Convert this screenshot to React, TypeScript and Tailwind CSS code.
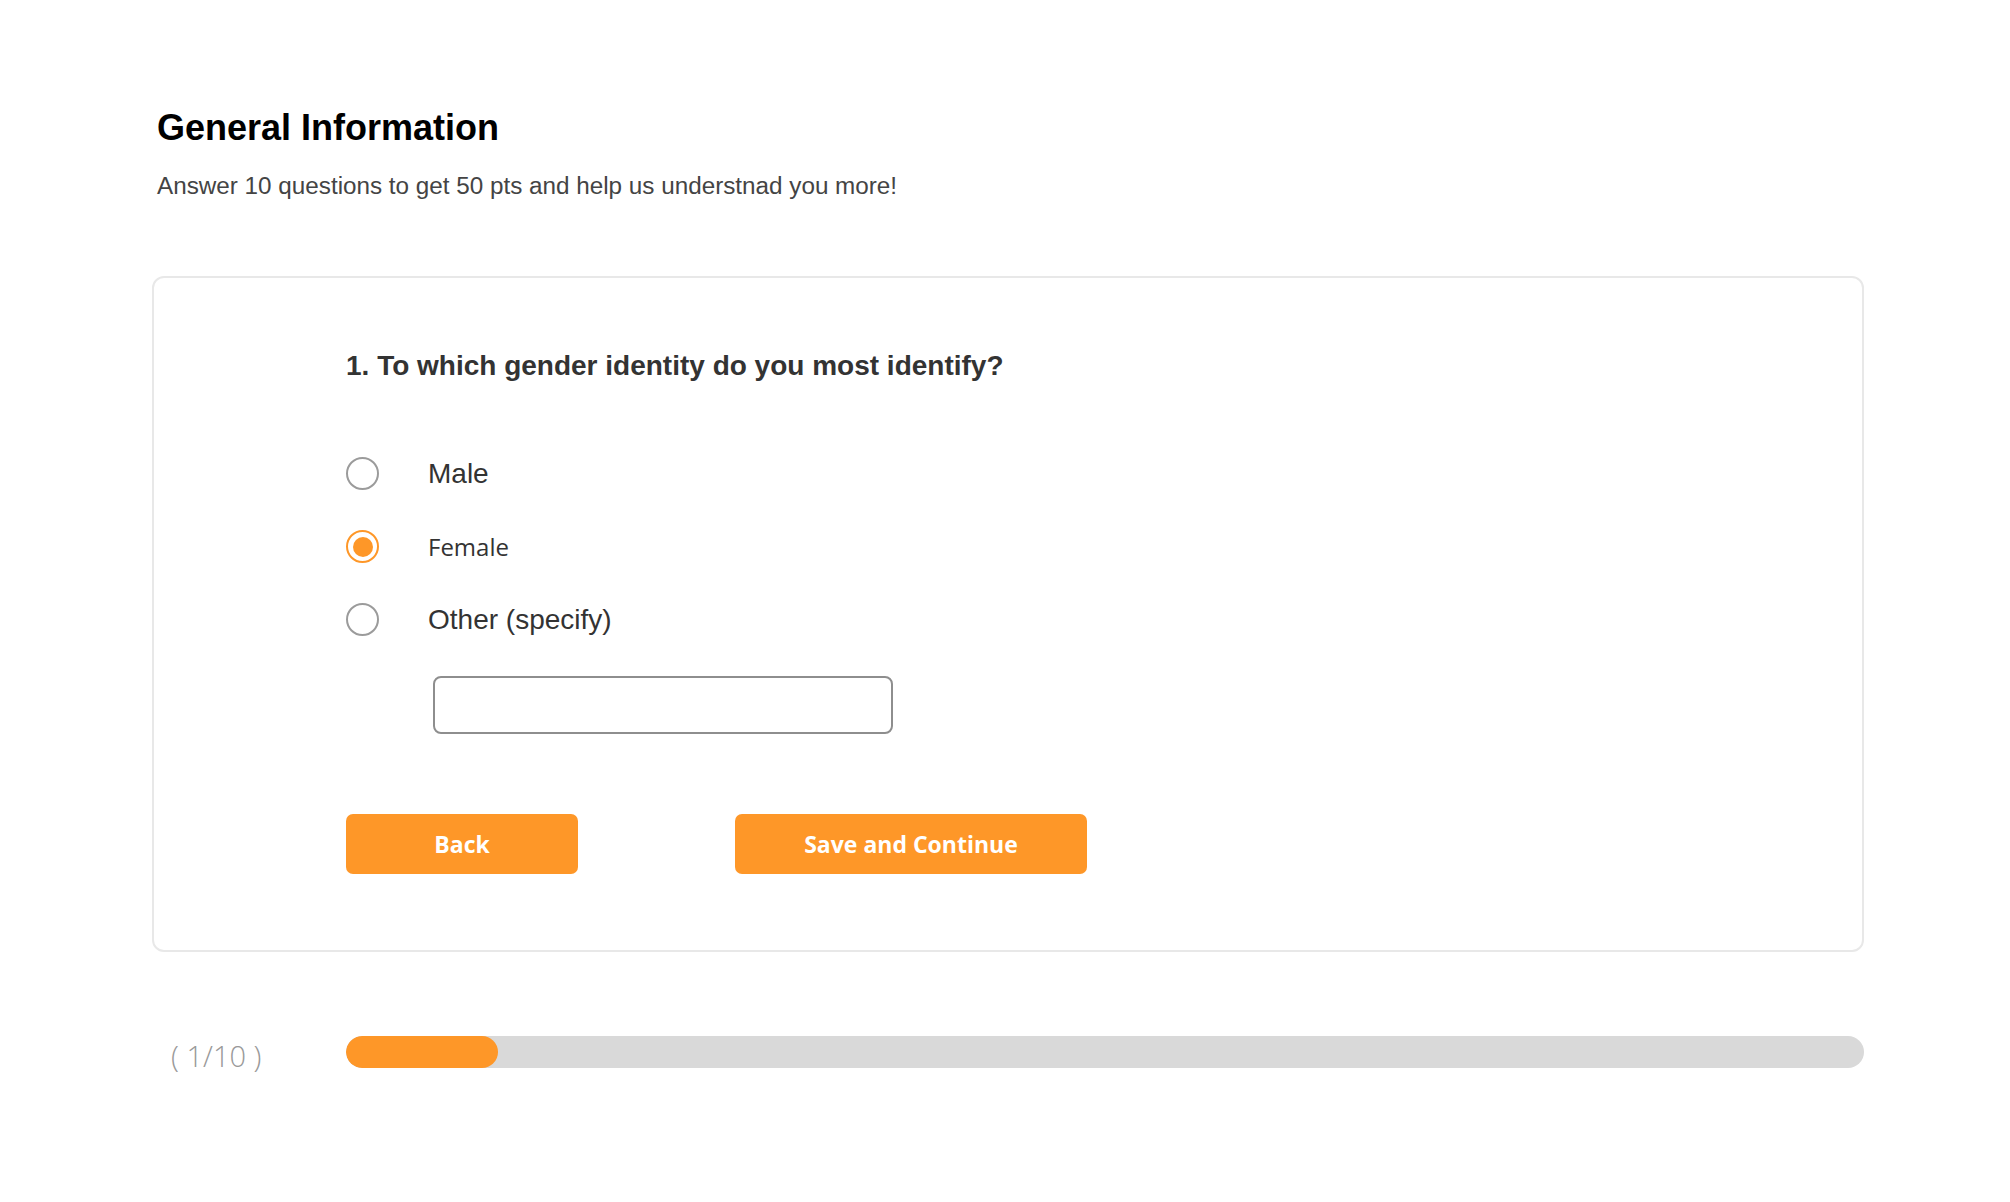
import React, { useState } from 'react';

type Option = { id: string; label: string; font: string };

const OPTIONS: Option[] = [
  { id: 'male', label: 'Male', font: "font-['Liberation_Sans',Arial,sans-serif] text-[28px]" },
  { id: 'female', label: 'Female', font: "font-['Open_Sans',sans-serif] text-[24px]" },
  { id: 'other', label: 'Other (specify)', font: "font-['Liberation_Sans',Arial,sans-serif] text-[28px]" },
];

const Radio: React.FC<{ checked: boolean }> = ({ checked }) => (
  <span
    className={`flex h-[33px] w-[33px] shrink-0 items-center justify-center rounded-full border-2 ${
      checked ? 'border-[#fe9728]' : 'border-[#9b9b9b]'
    }`}
  >
    {checked && <span className="h-5 w-5 rounded-full bg-[#fe9728]" />}
  </span>
);

export default function App() {
  const [gender, setGender] = useState('female');
  const [other, setOther] = useState('');
  const step = 1;
  const total = 10;

  return (
    <div className="min-h-screen w-full bg-white font-['Liberation_Sans',Arial,sans-serif]">
      <div className="w-[1864px] pl-[152px] pt-[106px]">
        <h1 className="ml-[5px] text-[36px] font-bold leading-[44px] text-black">General Information</h1>
        <p className="ml-[5px] mt-[22px] text-[24.25px] leading-[28px] text-[#444]">
          Answer 10 questions to get 50 pts and help us understnad you more!
        </p>

        <div className="mt-[76px] rounded-[12px] border-2 border-[#e8e8e8] pb-[76px] pl-[192px] pt-[71px]">
          <h2 className="text-[28px] font-bold leading-[34px] text-[#333]">
            1. To which gender identity do you most identify?
          </h2>

          <div className="mt-[54px] flex flex-col">
            {OPTIONS.map((opt) => (
              <label
                key={opt.id}
                className="flex h-[73px] cursor-pointer items-center gap-[49px]"
                onClick={() => setGender(opt.id)}
              >
                <Radio checked={gender === opt.id} />
                <span className={`${opt.font} text-[#333]`}>{opt.label}</span>
              </label>
            ))}
          </div>

          <input
            type="text"
            value={other}
            onChange={(e) => setOther(e.target.value)}
            className="ml-[87px] mt-[20px] block h-[58px] w-[460px] rounded-[8px] border-2 border-[#8e8e8e] px-4 text-[22px] outline-none"
          />

          <div className="mt-[80px] flex gap-[157px] font-['Open_Sans',sans-serif]">
            <button className="h-[60px] w-[232px] rounded-[7px] bg-[#fe9728] text-[23px] font-bold text-white">
              Back
            </button>
            <button className="h-[60px] w-[352px] rounded-[7px] bg-[#fe9728] text-[23px] font-bold text-white">
              Save and Continue
            </button>
          </div>
        </div>

        <div className="mt-[84px] flex items-start">
          <span className="ml-[19px] mt-[4px] font-['Open_Sans',sans-serif] text-[29px] font-light leading-[32px] text-[#999]">
            ( {step}/{total} )
          </span>
          <div className="ml-auto h-8 w-[1518px] overflow-hidden rounded-full bg-[#d9d9d9]">
            <div className="h-full rounded-full bg-[#fe9728]" style={{ width: `${(152 / 1518) * 100}%` }} />
          </div>
        </div>
      </div>
    </div>
  );
}
